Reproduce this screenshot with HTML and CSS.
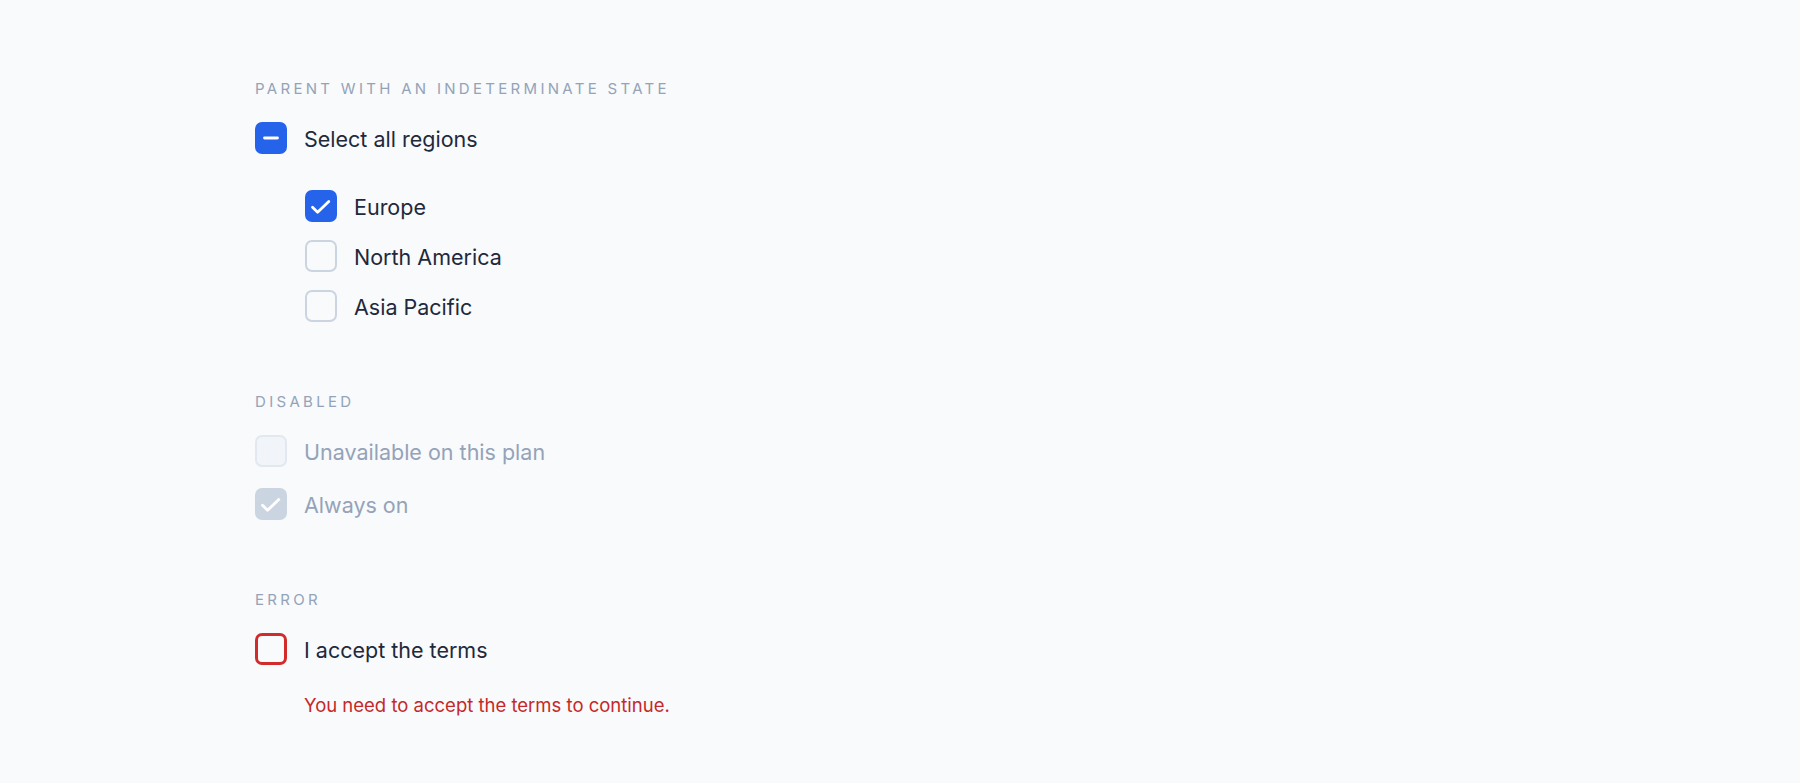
FILE: index.html
```html
<!DOCTYPE html>
<html lang="en">
<head>
<meta charset="utf-8">
<title>Checkboxes</title>
<link rel="stylesheet" href="styles.css">
</head>
<body>
<main class="page">
  <section class="section">
    <h2 class="heading">Parent with an indeterminate state</h2>
    <label class="row">
      <span class="box box-checked">
        <svg viewBox="0 0 32 32" width="32" height="32"><path d="M9.5 16H22.5" /></svg>
      </span>
      <span class="label">Select all regions</span>
    </label>
    <div class="children">
      <label class="row">
        <span class="box box-checked">
          <svg viewBox="0 0 32 32" width="32" height="32"><path d="M7.5 17.2L12.6 22.3L23.8 11.4" /></svg>
        </span>
        <span class="label">Europe</span>
      </label>
      <label class="row">
        <span class="box"></span>
        <span class="label">North America</span>
      </label>
      <label class="row">
        <span class="box"></span>
        <span class="label">Asia Pacific</span>
      </label>
    </div>
  </section>

  <section class="section section-disabled">
    <h2 class="heading">Disabled</h2>
    <div class="list">
      <label class="row row-disabled">
        <span class="box box-disabled"></span>
        <span class="label">Unavailable on this plan</span>
      </label>
      <label class="row row-disabled">
        <span class="box box-disabled-checked">
          <svg viewBox="0 0 32 32" width="32" height="32"><path d="M7.5 17.2L12.6 22.3L23.8 11.4" /></svg>
        </span>
        <span class="label">Always on</span>
      </label>
    </div>
  </section>

  <section class="section section-error">
    <h2 class="heading">Error</h2>
    <label class="row">
      <span class="box box-error"></span>
      <span class="label">I accept the terms</span>
    </label>
    <p class="error-msg">You need to accept the terms to continue.</p>
  </section>
</main>
</body>
</html>
```
FILE: styles.css
```css
html, body {
  margin: 0;
  padding: 0;
  background: #f8fafc;
}

body {
  font-family: Inter, "Noto Sans", "Liberation Sans", sans-serif;
  color: #1e293b;
}

.page {
  padding: 79px 0 0 255px;
  display: flex;
  flex-direction: column;
}

.section {
  display: flex;
  flex-direction: column;
}

.section-disabled {
  margin-top: 70px;
}

.section-error {
  margin-top: 70px;
}

.heading {
  margin: 0 0 23px 0;
  font-size: 15px;
  line-height: 20px;
  font-weight: 400;
  letter-spacing: 3.3px;
  text-transform: uppercase;
  color: #94a3b8;
}

.row {
  display: flex;
  align-items: center;
  gap: 17px;
  height: 32px;
}

.children {
  display: flex;
  flex-direction: column;
  gap: 18px;
  margin-top: 36px;
  padding-left: 50px;
}

.list {
  display: flex;
  flex-direction: column;
  gap: 21px;
}

.box {
  box-sizing: border-box;
  width: 32px;
  height: 32px;
  flex: none;
  border-radius: 7px;
  border: 2px solid #cbd5e1;
  background: #f8fafc;
  position: relative;
}

.box svg {
  position: absolute;
  left: -2px;
  top: -2px;
  fill: none;
  stroke: #ffffff;
  stroke-width: 2.8;
  stroke-linecap: round;
  stroke-linejoin: round;
}

.box-checked {
  background: #2563eb;
  border-color: #2563eb;
}

.box-disabled {
  background: #f1f5f9;
  border-color: #e2e8f0;
}

.box-disabled-checked {
  background: #cbd5e1;
  border-color: #cbd5e1;
}

.box-error {
  border: 3px solid #d12b2b;
}

.label {
  font-size: 21.5px;
  line-height: 28px;
  padding-top: 2px;
  color: #1e293b;
}

.row-disabled .label {
  color: #94a3b8;
}

.error-msg {
  margin: 28px 0 0 49px;
  font-size: 18.5px;
  line-height: 24px;
  color: #c62828;
}
```
